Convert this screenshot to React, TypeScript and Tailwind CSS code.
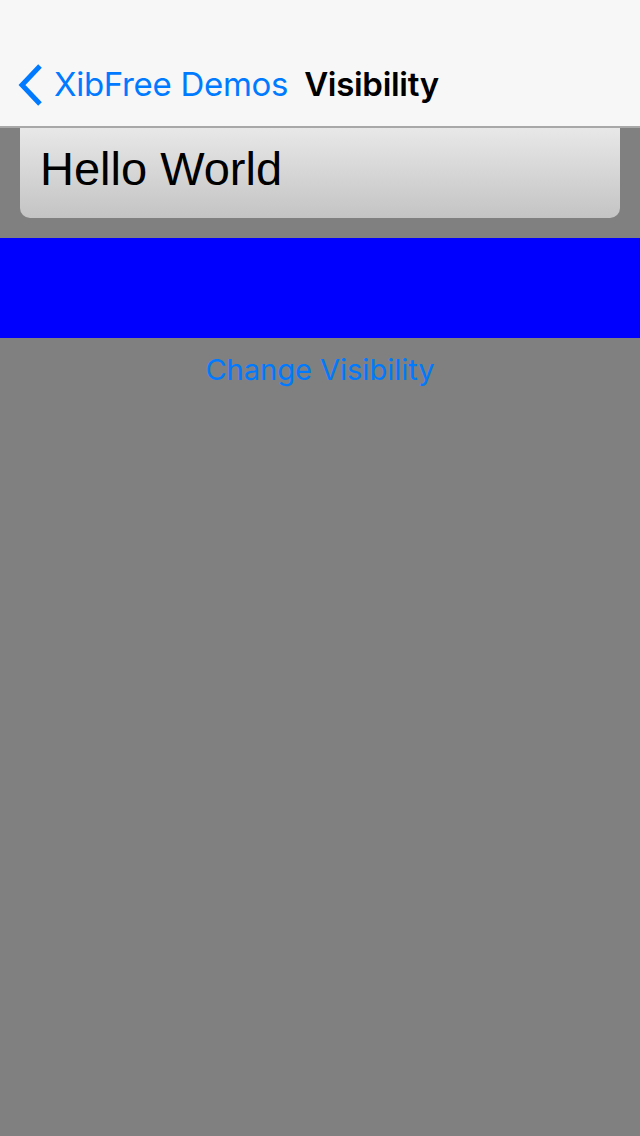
export default function App() {
    return (
        <div className="flex min-h-[1136px] w-[640px] flex-col bg-[#808080]">
            {/* Nav bar */}
            <div className="flex h-[128px] items-end border-b-2 border-[#a8a8a8] bg-[#f7f7f7] pb-[17px]">
                <div className="flex h-[48px] items-center">
                    <svg width="28" height="44" viewBox="0 0 28 44" className="ml-[16px]">
                        <path d="M24 3 L6 22 L24 41" fill="none" stroke="#007aff" strokeWidth="5" />
                    </svg>
                    <span className="ml-[10px] font-['Inter',sans-serif] text-[33px] tracking-[-0.3px] text-[#007aff]">
                        XibFree Demos
                    </span>
                    <span className="ml-[16px] font-['Inter',sans-serif] text-[33px] font-semibold tracking-[-0.3px] text-black">
                        Visibility
                    </span>
                </div>
            </div>

            {/* Card */}
            <div className="mx-[20px] flex h-[90px] items-center rounded-b-[10px] bg-gradient-to-b from-[#e8e8e8] to-[#c4c4c4] px-[20px] pb-[8px]">
                <span className="font-['Liberation_Sans',sans-serif] text-[47px] text-black">Hello World</span>
            </div>

            {/* Blue band */}
            <div className="mt-[20px] h-[100px] bg-[#0000ff]" />

            {/* Button */}
            <div className="flex justify-center pt-[10px]">
                <span className="font-['Inter',sans-serif] text-[29px] text-[#007aff]">Change Visibility</span>
            </div>
        </div>
    )
}
